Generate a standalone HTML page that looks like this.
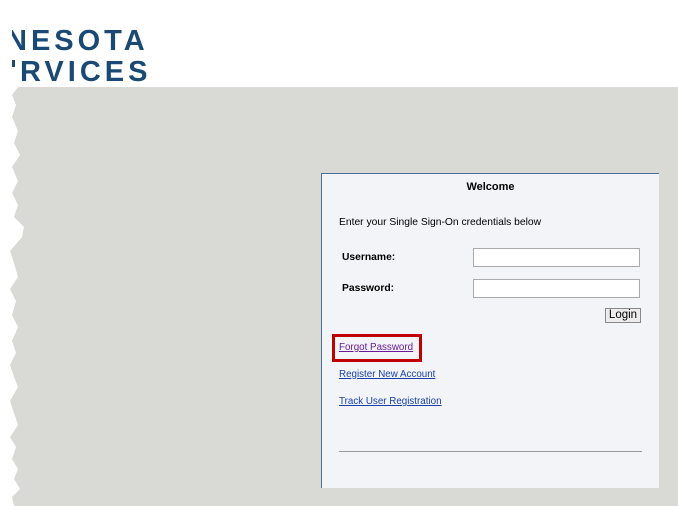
<!DOCTYPE html>
<html><head><meta charset="utf-8"><style>
html,body{margin:0;padding:0;width:678px;height:506px;overflow:hidden;background:#fff;font-family:"Liberation Sans",sans-serif;position:relative}
.logo{position:absolute;font-weight:bold;color:#1a4a73;font-size:29px;letter-spacing:4px;line-height:1;white-space:nowrap}
.gray{position:absolute;left:0;top:87px;width:678px;height:419px;background:#d9d9d5;
clip-path:polygon(18px 0,678px 0,678px 419px,14px 419px,12px 410px,20px 402px,14px 392px,18px 382px,12px 372px,16px 360px,10px 350px,18px 338px,14px 326px,10px 314px,18px 300px,14px 290px,10px 278px,16px 266px,12px 254px,18px 240px,12px 228px,16px 214px,10px 202px,18px 190px,14px 176px,10px 164px,22px 150px,24px 140px,14px 130px,18px 118px,12px 106px,18px 94px,12px 80px,20px 68px,14px 56px,18px 44px,12px 30px,16px 18px,12px 8px)}
.panel{position:absolute;left:321px;top:173px;width:337px;height:314px;background:#f2f4f7;border-left:1px solid #4a7099;border-top:1px solid #4a7099;font-family:"Liberation Sans",sans-serif;font-size:10.3px;color:#000}
.a{position:absolute;white-space:nowrap}
input{position:absolute;width:167px;height:19px;border:1px solid #aaa;background:#fff;padding:0;margin:0;box-sizing:border-box}
a{color:#1a3fa8;text-decoration:underline}
</style></head><body>
<div class="logo" style="left:6px;top:27px">NESOTA</div>
<div class="logo" style="left:20px;top:58px">RVICES</div>
<div style="position:absolute;left:0;top:20px;width:12px;height:70px;background:#fff"></div>
<div style="position:absolute;left:12px;top:60px;width:3px;height:7px;background:#1a4a73"></div>
<div class="gray"></div>
<div class="panel">
<div class="a" style="left:0;width:337px;text-align:center;top:7px;font-weight:bold;font-size:11px">Welcome</div>
<div class="a" style="left:17px;top:43px">Enter your Single Sign-On credentials below</div>
<div class="a" style="left:20px;top:78px;font-weight:bold">Username:</div>
<div class="a" style="left:20px;top:109px;font-weight:bold">Password:</div>
<input style="left:151px;top:74px">
<input style="left:151px;top:105px">
<div class="a" style="left:283px;top:134px;width:34px;height:13px;border:1px solid #888;background:#ececec;text-align:center;font-size:11.5px;line-height:13px">Login</div>
<div class="a" style="left:10px;top:160px;width:90px;height:28px;border:3px solid #c00000;box-sizing:border-box"></div>
<div class="a" style="left:17px;top:168px;font-size:9.8px"><a style="color:#6a1a9a">Forgot Password</a></div>
<div class="a" style="left:17px;top:195px;font-size:9.8px"><a>Register New Account</a></div>
<div class="a" style="left:17px;top:222px;font-size:9.8px"><a>Track User Registration</a></div>
<div class="a" style="left:17px;top:277px;width:303px;height:1px;background:#999"></div>
</div>
</body></html>
